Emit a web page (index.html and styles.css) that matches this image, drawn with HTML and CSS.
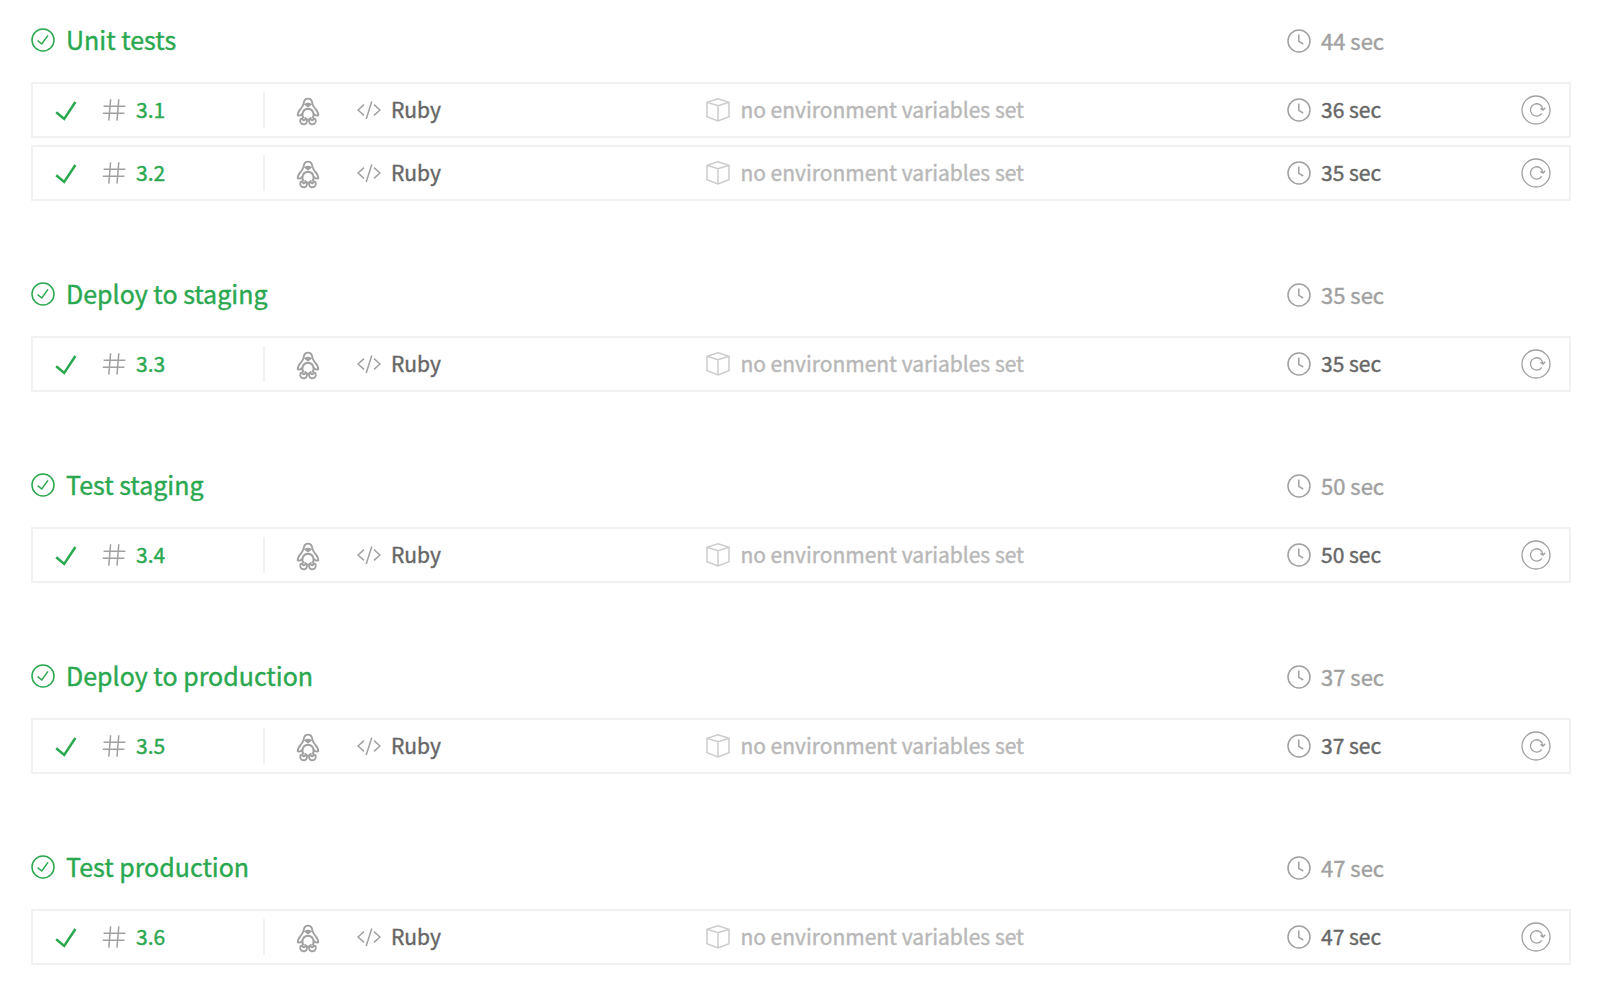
FILE: index.html
```html
<!DOCTYPE html>
<html lang="en">
<head>
    <meta charset="UTF-8">
    <meta name="viewport" content="width=device-width, initial-scale=1">
    <title>Build stages</title>
    <link rel="stylesheet" href="styles.css">
</head>
<body>

    <!-- icons -->
    <svg class="sprite" aria-hidden="true">
        <symbol id="passed" viewBox="0 0 24 24">
            <circle cx="12" cy="12" r="11"/>
            <path d="M6.6 12.6 10.8 16 17 7.4"/>
        </symbol>
        <symbol id="check" viewBox="0 0 24 24">
            <path d="M2.2 14.2 10.2 21 21.4 4"/>
        </symbol>
        <symbol id="hash" viewBox="0 0 24 24">
            <path d="M8.6 1.2 6.8 22.6M16.8 1.2 15 22.6M1.6 8.2H23.4M.8 15.2H22.4"/>
        </symbol>
        <symbol id="linux" viewBox="0 0 24 32">
            <path d="M6.4 19.6C5.4 21 3.6 22 1.8 21.4 1.4 17.4 4.6 15.6 6.4 12.4 8 9.6 7.4 9.4 8.2 7.2 9.4 3.8 14.6 3.8 15.8 7.2 16.6 9.4 16 9.6 17.6 12.4 19.4 15.6 22.6 17.4 22.2 21.4 20.4 22 18.6 21 17.6 19.6"/>
            <path d="M7.4 24.4C5 19.8 7.2 14.8 12 14.8S19 19.8 16.6 24.4M10.6 25.6H13.4"/>
            <path class="solid" d="M9.4 10.4C10.6 9.4 13.4 9.4 14.6 10.4L12 12.4Z"/>
            <path d="M9.4 24.2C11.6 25.2 11.6 29.4 8.8 30.2 6.2 30.8 3.8 28.8 4.2 26.4 4.4 24.4 6.2 24.4 6.8 25.6 7.6 26.8 9.4 26.4 9.4 24.2ZM14.6 24.2C12.4 25.2 12.4 29.4 15.2 30.2 17.8 30.8 20.2 28.8 19.8 26.4 19.6 24.4 17.8 24.4 17.2 25.6 16.4 26.8 14.6 26.4 14.6 24.2Z"/>
        </symbol>
        <symbol id="code" viewBox="0 0 24 24">
            <path d="M7 6.6 1 12 7 17.4M17 6.6 23 12 17 17.4M14.8 3.4 9.2 21"/>
        </symbol>
        <symbol id="cube" viewBox="0 0 24 24">
            <path d="M12 .8 23 4.2V18.8L12 23 1 18.8V4.2ZM1 4.2 12 7.6 23 4.2M12 7.6V23"/>
        </symbol>
        <symbol id="clock" viewBox="0 0 24 24">
            <circle cx="12" cy="12" r="11"/>
            <path d="M11.8 5.6V12.4L16.2 15"/>
        </symbol>
        <symbol id="restart" viewBox="0 0 30 30">
            <circle cx="15" cy="15" r="14"/>
            <path d="M20.8 18.4A6.2 6.2 0 1 1 21.8 14.4M19.4 13.4 22 15.2 24.2 12.8"/>
        </symbol>
    </svg>

    <main class="stages">

        <section class="stage">
            <header class="stage-header">
                <h2 class="stage-name"><svg class="icon"><use href="#passed"/></svg>Unit tests</h2>
                <p class="stage-duration"><svg class="icon"><use href="#clock"/></svg>44 sec</p>
            </header>
            <ul class="jobs">
                <li class="job">
                    <div class="job-number"><svg class="icon check"><use href="#check"/></svg><svg class="icon hash"><use href="#hash"/></svg><a href="#">3.1</a></div>
                    <div class="job-os"><svg class="icon linux"><use href="#linux"/></svg></div>
                    <div class="job-lang"><svg class="icon"><use href="#code"/></svg>Ruby</div>
                    <div class="job-env"><svg class="icon"><use href="#cube"/></svg>no environment variables set</div>
                    <div class="job-duration"><svg class="icon"><use href="#clock"/></svg>36 sec</div>
                    <button class="restart" type="button" aria-label="Restart job"><svg><use href="#restart"/></svg></button>
                </li>
                <li class="job">
                    <div class="job-number"><svg class="icon check"><use href="#check"/></svg><svg class="icon hash"><use href="#hash"/></svg><a href="#">3.2</a></div>
                    <div class="job-os"><svg class="icon linux"><use href="#linux"/></svg></div>
                    <div class="job-lang"><svg class="icon"><use href="#code"/></svg>Ruby</div>
                    <div class="job-env"><svg class="icon"><use href="#cube"/></svg>no environment variables set</div>
                    <div class="job-duration"><svg class="icon"><use href="#clock"/></svg>35 sec</div>
                    <button class="restart" type="button" aria-label="Restart job"><svg><use href="#restart"/></svg></button>
                </li>
            </ul>
        </section>

        <section class="stage">
            <header class="stage-header">
                <h2 class="stage-name"><svg class="icon"><use href="#passed"/></svg>Deploy to staging</h2>
                <p class="stage-duration"><svg class="icon"><use href="#clock"/></svg>35 sec</p>
            </header>
            <ul class="jobs">
                <li class="job">
                    <div class="job-number"><svg class="icon check"><use href="#check"/></svg><svg class="icon hash"><use href="#hash"/></svg><a href="#">3.3</a></div>
                    <div class="job-os"><svg class="icon linux"><use href="#linux"/></svg></div>
                    <div class="job-lang"><svg class="icon"><use href="#code"/></svg>Ruby</div>
                    <div class="job-env"><svg class="icon"><use href="#cube"/></svg>no environment variables set</div>
                    <div class="job-duration"><svg class="icon"><use href="#clock"/></svg>35 sec</div>
                    <button class="restart" type="button" aria-label="Restart job"><svg><use href="#restart"/></svg></button>
                </li>
            </ul>
        </section>

        <section class="stage">
            <header class="stage-header">
                <h2 class="stage-name"><svg class="icon"><use href="#passed"/></svg>Test staging</h2>
                <p class="stage-duration"><svg class="icon"><use href="#clock"/></svg>50 sec</p>
            </header>
            <ul class="jobs">
                <li class="job">
                    <div class="job-number"><svg class="icon check"><use href="#check"/></svg><svg class="icon hash"><use href="#hash"/></svg><a href="#">3.4</a></div>
                    <div class="job-os"><svg class="icon linux"><use href="#linux"/></svg></div>
                    <div class="job-lang"><svg class="icon"><use href="#code"/></svg>Ruby</div>
                    <div class="job-env"><svg class="icon"><use href="#cube"/></svg>no environment variables set</div>
                    <div class="job-duration"><svg class="icon"><use href="#clock"/></svg>50 sec</div>
                    <button class="restart" type="button" aria-label="Restart job"><svg><use href="#restart"/></svg></button>
                </li>
            </ul>
        </section>

        <section class="stage">
            <header class="stage-header">
                <h2 class="stage-name"><svg class="icon"><use href="#passed"/></svg>Deploy to production</h2>
                <p class="stage-duration"><svg class="icon"><use href="#clock"/></svg>37 sec</p>
            </header>
            <ul class="jobs">
                <li class="job">
                    <div class="job-number"><svg class="icon check"><use href="#check"/></svg><svg class="icon hash"><use href="#hash"/></svg><a href="#">3.5</a></div>
                    <div class="job-os"><svg class="icon linux"><use href="#linux"/></svg></div>
                    <div class="job-lang"><svg class="icon"><use href="#code"/></svg>Ruby</div>
                    <div class="job-env"><svg class="icon"><use href="#cube"/></svg>no environment variables set</div>
                    <div class="job-duration"><svg class="icon"><use href="#clock"/></svg>37 sec</div>
                    <button class="restart" type="button" aria-label="Restart job"><svg><use href="#restart"/></svg></button>
                </li>
            </ul>
        </section>

        <section class="stage">
            <header class="stage-header">
                <h2 class="stage-name"><svg class="icon"><use href="#passed"/></svg>Test production</h2>
                <p class="stage-duration"><svg class="icon"><use href="#clock"/></svg>47 sec</p>
            </header>
            <ul class="jobs">
                <li class="job">
                    <div class="job-number"><svg class="icon check"><use href="#check"/></svg><svg class="icon hash"><use href="#hash"/></svg><a href="#">3.6</a></div>
                    <div class="job-os"><svg class="icon linux"><use href="#linux"/></svg></div>
                    <div class="job-lang"><svg class="icon"><use href="#code"/></svg>Ruby</div>
                    <div class="job-env"><svg class="icon"><use href="#cube"/></svg>no environment variables set</div>
                    <div class="job-duration"><svg class="icon"><use href="#clock"/></svg>47 sec</div>
                    <button class="restart" type="button" aria-label="Restart job"><svg><use href="#restart"/></svg></button>
                </li>
            </ul>
        </section>

    </main>

</body>
</html>
```
FILE: styles.css
```css
* {
    box-sizing: border-box;
}
body {
    margin: 0;
    background: #fff;
    color: #666;
    font-family: "Noto Sans CJK SC", "Noto Sans", sans-serif;
    font-size: 21px;
    line-height: 32px;
    -webkit-text-stroke: 0.4px;
}
.sprite {
    display: none;
}
svg {
    fill: none;
    stroke: currentColor;
    stroke-width: 1.5;
}
.icon {
    flex: none;
    width: 24px;
    height: 24px;
    margin-top: 2px;
    color: #a0a0a0;
}
.stages {
    padding: 16px 29px 0 31px;
}
.stage + .stage {
    margin-top: 69px;
}

/* stage title and total time */
.stage-header {
    display: grid;
    grid-template-columns: 1fr 284px;
    height: 48px;
    margin-bottom: 18px;
}
.stage-name,
.stage-duration {
    display: flex;
    align-items: center;
    margin: 0;
    padding-bottom: 2px;
    font-weight: 400;
}
.stage-name {
    gap: 11px;
    font-size: 25px;
    color: #2aa84f;
}
.stage-name .icon {
    color: #2aa84f;
}
.stage-duration {
    gap: 10px;
    padding-bottom: 1px;
    font-size: 22px;
    color: #a0a0a0;
}

/* job rows */
.jobs {
    display: grid;
    gap: 7px;
    margin: 0;
    padding: 0;
    list-style: none;
}
.job {
    display: grid;
    grid-template-columns: 232px 92px 349fr 580fr 234px 48px;
    align-items: center;
    height: 56px;
    border: 2px solid #f1f1f0;
}
.job > div {
    display: flex;
    align-items: center;
    gap: 10px;
    padding-bottom: 2px;
}
.job .job-number {
    height: 36px;
    padding-left: 21px;
    border-right: 2px solid #f1f1f0;
}
.job-number a {
    color: #2aa84f;
    text-decoration: none;
}
.check {
    margin-right: 14px;
    color: #2aa84f;
    stroke-width: 2.5;
}
.job .job-os {
    padding-left: 31px;
}
.linux {
    height: 32px;
    stroke-width: 1.9;
}
.solid {
    fill: currentColor;
}
.job-env {
    color: #b8b8b8;
}
.job-env .icon {
    color: #ccc;
}
.restart {
    width: 30px;
    height: 30px;
    padding: 0;
    border: 0;
    background: none;
    color: #a0a0a0;
    cursor: pointer;
}
.restart svg {
    display: block;
    width: 30px;
    height: 30px;
    stroke-width: 1.3;
}
```
